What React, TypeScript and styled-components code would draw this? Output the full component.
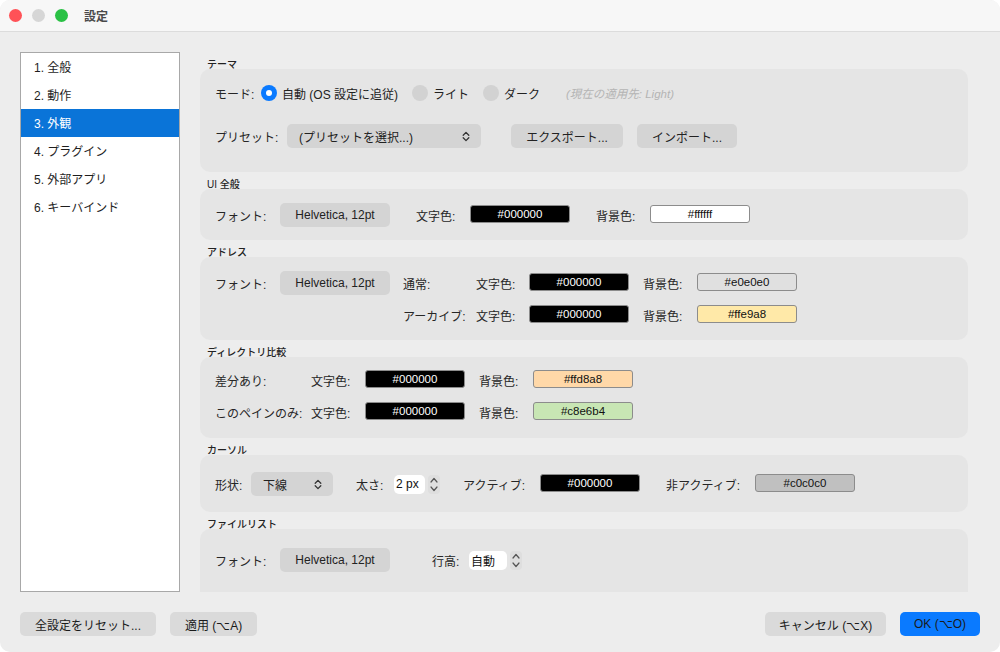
import React from "react"
import styled, { createGlobalStyle } from "styled-components"

const FONT = `"Liberation Sans", "Noto Sans CJK JP", sans-serif`

const GlobalStyle = createGlobalStyle`
  html, body {
    margin: 0;
    padding: 0;
    background: #ffffff;
  }
  body {
    font-family: ${FONT};
    font-size: 12px;
    color: #222222;
  }
`

const sections = ['1. 全般', '2. 動作', '3. 外観', '4. プラグイン', '5. 外部アプリ', '6. キーバインド']

const UpDownIcon = () => (
  <svg width="8" height="11" viewBox="0 0 8 11">
    <path d="M1.2 4.2 L4 1.4 L6.8 4.2 M1.2 6.8 L4 9.6 L6.8 6.8" fill="none" stroke="#333" strokeWidth="1.3" strokeLinecap="round" strokeLinejoin="round" />
  </svg>
)

const Stepper = () => (
  <StepperWrapper>
    <svg width="10" height="19" viewBox="0 0 10 19">
      <path d="M2 7 L5 3.5 L8 7" fill="none" stroke="#555" strokeWidth="1.2" strokeLinecap="round" strokeLinejoin="round" />
      <path d="M2 12 L5 15.5 L8 12" fill="none" stroke="#555" strokeWidth="1.2" strokeLinecap="round" strokeLinejoin="round" />
    </svg>
  </StepperWrapper>
)

/**
 * A colour well showing its hex value.
 */
const Swatch = ({ color, dark }: { color: string, dark?: boolean }) => (
  <ColorWell $bg={color} $dark={dark}>{color}</ColorWell>
)

const Radio = ({ checked, label }: { checked?: boolean, label: string }) => (
  <RadioOption>
    <RadioDot $checked={checked} />
    <span>{label}</span>
  </RadioOption>
)

const Section = ({ title, children }: { title: string, children: React.ReactNode }) => (
  <SectionWrapper>
    <SectionTitle>{title}</SectionTitle>
    {children}
  </SectionWrapper>
)

export default function App() {
  return (
    <>
      <GlobalStyle />
      <Window>
        <TitleBar>
          <Light $color="#ff5257" />
          <Light $color="#d6d6d6" />
          <Light $color="#2ac145" />
          <WindowTitle>設定</WindowTitle>
        </TitleBar>

        <Body>
          <Sidebar>
            {sections.map((s, i) => (
              <SidebarItem key={s} $selected={i === 2}>{s}</SidebarItem>
            ))}
          </Sidebar>

          <Content>
            <Section title="テーマ">
              <GroupBox $pad="12px 15px 24px" $gap={19}>
                <FormRow $cols="46px 151px 71px 83px auto" $h={24}>
                  <Label>モード:</Label>
                  <Radio checked label="自動 (OS 設定に追従)" />
                  <Radio label="ライト" />
                  <Radio label="ダーク" />
                  <Hint>(現在の適用先: Light)</Hint>
                </FormRow>
                <FormRow $cols="72px 224px 126px 100px" $h={24}>
                  <Label>プリセット:</Label>
                  <SelectBox $w={194}>
                    <span>(プリセットを選択...)</span>
                    <UpDownIcon />
                  </SelectBox>
                  <PushButton $w={112}>エクスポート...</PushButton>
                  <PushButton $w={100}>インポート...</PushButton>
                </FormRow>
              </GroupBox>
            </Section>

            <Section title="UI 全般">
              <GroupBox $pad="14px 15px 13px">
                <FormRow $cols="65px 136px 54px 126px 54px 100px" $h={24}>
                  <Label>フォント:</Label>
                  <PushButton $w={110}>Helvetica, 12pt</PushButton>
                  <Label>文字色:</Label>
                  <Swatch color="#000000" dark />
                  <Label>背景色:</Label>
                  <Swatch color="#ffffff" />
                </FormRow>
              </GroupBox>
            </Section>

            <Section title="アドレス">
              <GroupBox $pad="14px 15px 13px" $gap={8}>
                <FormRow $cols="65px 123px 73px 53px 114px 54px 100px" $h={24}>
                  <Label>フォント:</Label>
                  <PushButton $w={110}>Helvetica, 12pt</PushButton>
                  <Label>通常:</Label>
                  <Label>文字色:</Label>
                  <Swatch color="#000000" dark />
                  <Label>背景色:</Label>
                  <Swatch color="#e0e0e0" />
                </FormRow>
                <FormRow $cols="65px 123px 73px 53px 114px 54px 100px" $h={24}>
                  <span />
                  <span />
                  <Label>アーカイブ:</Label>
                  <Label>文字色:</Label>
                  <Swatch color="#000000" dark />
                  <Label>背景色:</Label>
                  <Swatch color="#ffe9a8" />
                </FormRow>
              </GroupBox>
            </Section>

            <Section title="ディレクトリ比較">
              <GroupBox $pad="12px 15px 15px" $gap={10}>
                <FormRow $cols="96px 54px 114px 54px 100px" $h={22}>
                  <Label>差分あり:</Label>
                  <Label>文字色:</Label>
                  <Swatch color="#000000" dark />
                  <Label>背景色:</Label>
                  <Swatch color="#ffd8a8" />
                </FormRow>
                <FormRow $cols="96px 54px 114px 54px 100px" $h={22}>
                  <Label>このペインのみ:</Label>
                  <Label>文字色:</Label>
                  <Swatch color="#000000" dark />
                  <Label>背景色:</Label>
                  <Swatch color="#c8e6b4" />
                </FormRow>
              </GroupBox>
            </Section>

            <Section title="カーソル">
              <GroupBox $pad="17px 15px 16px">
                <FormRow $cols="36px 105px 38px 69px 77px 126px 89px 100px" $h={24}>
                  <Label>形状:</Label>
                  <SelectBox $w={82}>
                    <span>下線</span>
                    <UpDownIcon />
                  </SelectBox>
                  <Label>太さ:</Label>
                  <SpinField>
                    <TextField $w={31}>2 px</TextField>
                    <Stepper />
                  </SpinField>
                  <Label>アクティブ:</Label>
                  <Swatch color="#000000" dark />
                  <Label>非アクティブ:</Label>
                  <Swatch color="#c0c0c0" />
                </FormRow>
              </GroupBox>
            </Section>

            <Section title="ファイルリスト">
              <GroupBox $pad="19px 15px 40px">
                <FormRow $cols="65px 152px 37px 100px" $h={24}>
                  <Label>フォント:</Label>
                  <PushButton $w={110}>Helvetica, 12pt</PushButton>
                  <Label>行高:</Label>
                  <SpinField>
                    <TextField $w={38}>自動</TextField>
                    <Stepper />
                  </SpinField>
                </FormRow>
              </GroupBox>
            </Section>
          </Content>
        </Body>

        <Footer>
          <FooterGroup>
            <FooterButton>全設定をリセット...</FooterButton>
            <FooterButton>適用 (⌥A)</FooterButton>
          </FooterGroup>
          <FooterGroup>
            <FooterButton $w={121}>キャンセル (⌥X)</FooterButton>
            <FooterButton $w={80} $primary>OK (⌥O)</FooterButton>
          </FooterGroup>
        </Footer>
      </Window>
    </>
  )
}

const Window = styled.div`
  width: 1000px;
  height: 652px;
  display: flex;
  flex-direction: column;
  background: #ededed;
  border-radius: 10px;
  overflow: hidden;
  box-sizing: border-box;
`

const TitleBar = styled.div`
  height: 31px;
  flex-shrink: 0;
  display: flex;
  align-items: center;
  padding-left: 9px;
  gap: 10px;
  background: #f7f7f7;
  border-bottom: 1px solid #dcdcdc;
`

const Light = styled.span<{ $color: string }>`
  width: 13px;
  height: 13px;
  border-radius: 50%;
  background: ${({ $color }) => $color};
`

const WindowTitle = styled.span`
  margin-left: 6px;
  font-size: 12px;
  font-weight: 600;
  color: #4a4a4a;
`

const Body = styled.div`
  display: flex;
  padding: 20px 20px 0 20px;
  height: 560px;
  box-sizing: border-box;
`

const Sidebar = styled.div`
  width: 160px;
  height: 540px;
  box-sizing: border-box;
  flex-shrink: 0;
  background: #ffffff;
  border: 1px solid #a8a8a8;
  display: flex;
  flex-direction: column;
`

const SidebarItem = styled.div<{ $selected?: boolean }>`
  height: 28px;
  box-sizing: border-box;
  padding-bottom: 2px;
  display: flex;
  align-items: center;
  padding-left: 13px;
  font-size: 12px;
  color: ${({ $selected }) => $selected ? '#ffffff' : '#1e1e1e'};
  background: ${({ $selected }) => $selected ? '#0a74d8' : 'transparent'};
`

const Content = styled.div`
  flex: 1;
  height: 540px;
  margin-left: 10px;
  padding: 0 12px 0 10px;
  overflow: hidden;
  display: flex;
  flex-direction: column;
`

const SectionWrapper = styled.section`
  padding-top: 5px;
  display: flex;
  flex-direction: column;
`

const SectionTitle = styled.div`
  height: 12px;
  line-height: 15px;
  padding-left: 7px;
  font-size: 10px;
  font-weight: 500;
  color: #222222;
`

const GroupBox = styled.div<{ $pad: string, $gap?: number }>`
  background: #e5e5e5;
  border-radius: 10px;
  padding: ${({ $pad }) => $pad};
  display: flex;
  flex-direction: column;
  gap: ${({ $gap }) => $gap || 0}px;
`

const FormRow = styled.div<{ $cols: string, $h: number }>`
  display: grid;
  grid-template-columns: ${({ $cols }) => $cols};
  height: ${({ $h }) => $h}px;
  align-items: center;
  justify-items: start;
`

const Label = styled.span`
  font-size: 12px;
  color: #262626;
  white-space: nowrap;
`

const Hint = styled.span`
  font-size: 11.5px;
  font-style: italic;
  color: #b4b4b4;
  white-space: nowrap;
`

const RadioOption = styled.span`
  display: flex;
  align-items: center;
  gap: 5px;
  white-space: nowrap;
`

const RadioDot = styled.span<{ $checked?: boolean }>`
  width: 16px;
  height: 16px;
  border-radius: 50%;
  box-sizing: border-box;
  background: ${({ $checked }) => $checked ? '#0a7aff' : '#d2d2d2'};
  display: flex;
  align-items: center;
  justify-content: center;
  &::after {
    content: '';
    width: 6px;
    height: 6px;
    border-radius: 50%;
    background: #ffffff;
    display: ${({ $checked }) => $checked ? 'block' : 'none'};
  }
`

const PushButton = styled.div<{ $w: number }>`
  width: ${({ $w }) => $w}px;
  height: 24px;
  border-radius: 5px;
  background: #d4d4d4;
  display: flex;
  align-items: center;
  justify-content: center;
  font-size: 12px;
  color: #222222;
  white-space: nowrap;
`

const SelectBox = styled.div<{ $w: number }>`
  width: ${({ $w }) => $w}px;
  height: 24px;
  box-sizing: border-box;
  border-radius: 5px;
  background: #d4d4d4;
  display: flex;
  align-items: center;
  justify-content: space-between;
  padding: 0 11px 0 12px;
  font-size: 12px;
  color: #222222;
  white-space: nowrap;
`

const ColorWell = styled.div<{ $bg: string, $dark?: boolean }>`
  width: 100px;
  height: 18px;
  box-sizing: border-box;
  border: 1px solid #8c8c8c;
  border-radius: 3px;
  background: ${({ $bg }) => $bg};
  color: ${({ $dark }) => $dark ? '#ffffff' : '#111111'};
  font-size: 11.5px;
  display: flex;
  align-items: center;
  justify-content: center;
  margin-top: -2px;
`

const SpinField = styled.div`
  display: flex;
  align-items: center;
  gap: 3px;
`

const TextField = styled.div<{ $w: number }>`
  width: ${({ $w }) => $w}px;
  height: 19px;
  box-sizing: border-box;
  background: #ffffff;
  border-radius: 5px;
  padding-left: 2px;
  display: flex;
  align-items: center;
  font-size: 12px;
  color: #111111;
`

const StepperWrapper = styled.div`
  width: 12px;
  height: 19px;
  border-radius: 4px;
  background: #dedede;
  display: flex;
  align-items: center;
  justify-content: center;
`

const Footer = styled.div`
  flex: 1;
  display: flex;
  justify-content: space-between;
  align-items: flex-start;
  padding: 20px 20px 0 20px;
`

const FooterGroup = styled.div`
  display: flex;
  gap: 14px;
`

const FooterButton = styled.div<{ $primary?: boolean, $w?: number }>`
  height: 24px;
  padding: 0 15px;
  box-sizing: border-box;
  border-radius: 5px;
  background: ${({ $primary }) => $primary ? '#0a7aff' : '#dadada'};
  display: flex;
  align-items: center;
  justify-content: center;
  font-size: 12px;
  color: #1a1a1a;
  white-space: nowrap;
  width: ${({ $w }) => $w ? `${$w}px` : 'auto'};
`
